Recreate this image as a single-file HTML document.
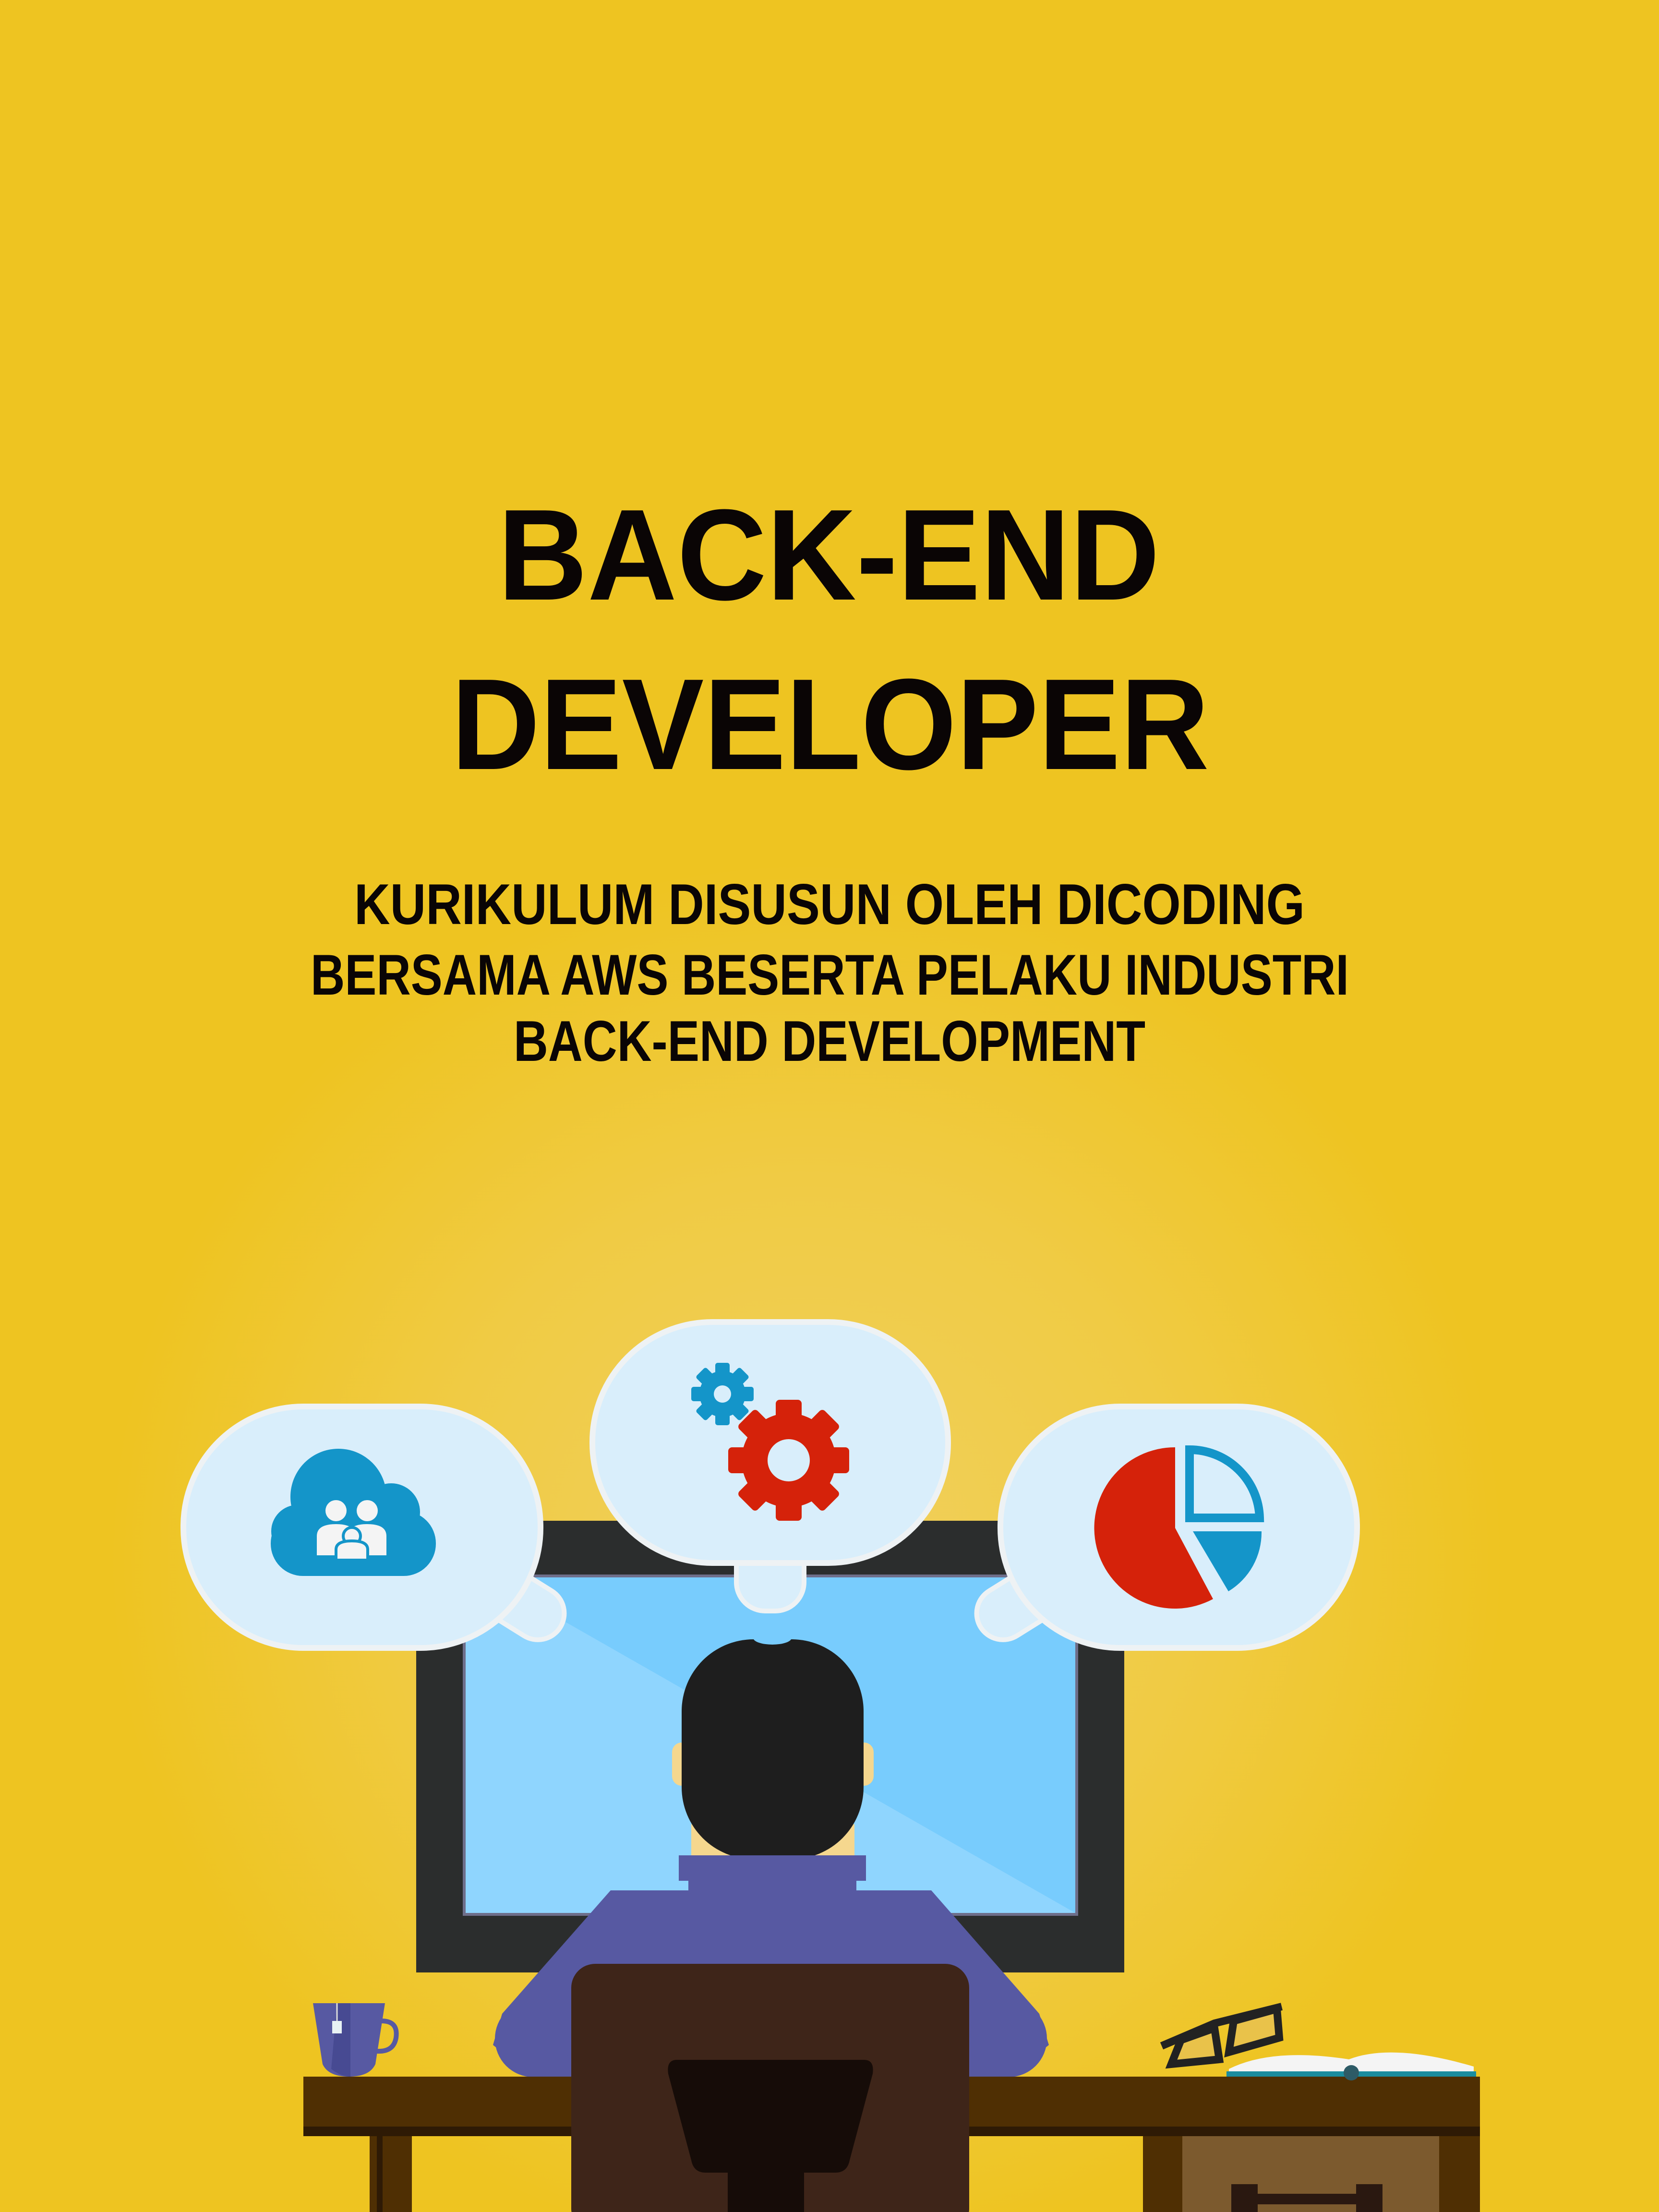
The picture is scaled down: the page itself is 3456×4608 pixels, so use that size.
<!DOCTYPE html>
<html><head><meta charset="utf-8"><style>
html,body{margin:0;padding:0;background:#EEC421;}
svg{display:block}
</style></head><body>
<svg width="3456" height="4608" viewBox="0 0 3456 4608" xmlns="http://www.w3.org/2000/svg">
<defs>
<radialGradient id="g" cx="1680" cy="3250" r="1450" gradientUnits="userSpaceOnUse">
<stop offset="0" stop-color="#F1D05E"/><stop offset="0.55" stop-color="#F0CB44"/><stop offset="1" stop-color="#EEC421"/>
</radialGradient>
</defs>
<rect width="3456" height="4608" fill="url(#g)"/>

<g font-family="'Liberation Sans',sans-serif" font-weight="700" fill="#0A0505" text-anchor="start">
<text x="1037" y="1249" font-size="270" textLength="1379" lengthAdjust="spacingAndGlyphs">BACK-END</text>
<text x="940" y="1602" font-size="270" textLength="1579" lengthAdjust="spacingAndGlyphs">DEVELOPER</text>
<text x="738" y="1925" font-size="120" textLength="1980" lengthAdjust="spacingAndGlyphs">KURIKULUM DISUSUN OLEH DICODING</text>
<text x="647" y="2072" font-size="120" textLength="2163" lengthAdjust="spacingAndGlyphs">BERSAMA AWS BESERTA PELAKU INDUSTRI</text>
<text x="1070" y="2210" font-size="120" textLength="1316" lengthAdjust="spacingAndGlyphs">BACK-END DEVELOPMENT</text>
</g>

<!-- monitor -->
<rect x="867" y="3168" width="1475" height="941" fill="#2B2D2D"/>
<rect x="964" y="3280" width="1282" height="711" fill="#6E6E8A"/>
<rect x="970" y="3286" width="1270" height="699" fill="#78CCFD"/>
<polygon points="970,3330 1180,3380 2240,3985 970,3985" fill="#8FD5FE"/>

<!-- bubble tails -->
<rect x="1534" y="3180" width="141" height="176" rx="60" fill="#D9EEFB" stroke="#EEF2F4" stroke-width="10"/>
<rect x="1010" y="3290" width="170" height="110" rx="55" transform="rotate(32 1095 3345)" fill="#D9EEFB" stroke="#EEF2F4" stroke-width="10"/>
<rect x="2030" y="3290" width="170" height="110" rx="55" transform="rotate(-32 2115 3345)" fill="#D9EEFB" stroke="#EEF2F4" stroke-width="10"/>
<!-- bubbles -->
<rect x="382" y="2930" width="744" height="503" rx="250" fill="#D9EEFB" stroke="#EEF2F4" stroke-width="12"/>
<rect x="1234" y="2754" width="741" height="502" rx="250" fill="#D9EEFB" stroke="#EEF2F4" stroke-width="12"/>
<rect x="2084" y="2930" width="743" height="503" rx="250" fill="#D9EEFB" stroke="#EEF2F4" stroke-width="12"/>

<!-- cloud icon -->
<g fill="#1495C9">
<rect x="564" y="3148" width="344" height="135" rx="67"/>
<circle cx="705" cy="3118" r="100"/>
<circle cx="815" cy="3150" r="60"/>
<circle cx="620" cy="3190" r="55"/>
</g>
<g fill="#F4F4F4">
<circle cx="700" cy="3147" r="22"/><circle cx="765" cy="3147" r="22"/>
<path d="M660,3240 v-40 q0,-25 40,-25 q40,0 40,25 v40 z"/>
<path d="M725,3240 v-40 q0,-25 40,-25 q40,0 40,25 v40 z"/>
<circle cx="733" cy="3200" r="18" stroke="#1495C9" stroke-width="6"/>
<path d="M700,3250 v-22 q0,-18 33,-18 q33,0 33,18 v22 z" stroke="#1495C9" stroke-width="6"/>
</g>

<!-- gears -->
<g fill="#1495C9" transform="translate(1505 2904)">
<circle r="48"/>
<g><rect x="-15" y="-65" width="30" height="130" rx="5"/><rect x="-15" y="-65" width="30" height="130" rx="5" transform="rotate(45)"/><rect x="-15" y="-65" width="30" height="130" rx="5" transform="rotate(90)"/><rect x="-15" y="-65" width="30" height="130" rx="5" transform="rotate(135)"/></g>
<circle r="18" fill="#D9EEFB"/>
</g>
<g fill="#D5220A" transform="translate(1643 3042)">
<circle r="98"/>
<g><rect x="-27" y="-126" width="54" height="252" rx="8"/><rect x="-27" y="-126" width="54" height="252" rx="8" transform="rotate(45)"/><rect x="-27" y="-126" width="54" height="252" rx="8" transform="rotate(90)"/><rect x="-27" y="-126" width="54" height="252" rx="8" transform="rotate(135)"/></g>
<circle r="44" fill="#D9EEFB"/>
</g>

<!-- pie -->
<path d="M2448,3183 L2527,3331 A168,168 0 1 1 2448,3015 Z" fill="#D5220A"/>
<path d="M2478,3162 L2478,3020 A146,146 0 0 1 2624,3162 Z" fill="#D9EEFB" stroke="#1495C9" stroke-width="18"/>
<path d="M2485,3190 L2628,3190 A143,143 0 0 1 2559,3315 Z" fill="#1495C9"/>

<!-- person -->
<rect x="1400" y="3630" width="420" height="90" rx="20" fill="#F5D78E"/>
<rect x="1440" y="3800" width="340" height="80" fill="#F5D78E"/>
<rect x="1420" y="3415" width="379" height="458" rx="150" fill="#1E1E1E"/>
<ellipse cx="1609" cy="3412" rx="40" ry="14" fill="#78CCFD"/>
<rect x="1414" y="3865" width="390" height="53" fill="#5759A2"/>
<rect x="1434" y="3915" width="350" height="30" fill="#5759A2"/>
<polygon points="1272,3938 1940,3938 2165,4195 2185,4260 2101,4327 1111,4327 1027,4260 1046,4195" fill="#5759A2"/>
<circle cx="1111" cy="4247" r="80" fill="#5759A2"/>
<circle cx="2101" cy="4247" r="80" fill="#5759A2"/>

<!-- desk -->
<rect x="632" y="4326" width="2451" height="118" fill="#4F2F03"/>
<rect x="632" y="4430" width="2451" height="20" fill="#2E1A05"/>
<rect x="770" y="4450" width="88" height="158" fill="#4F2F03"/>
<rect x="785" y="4450" width="12" height="158" fill="#2E1A05"/>
<rect x="2381" y="4450" width="82" height="158" fill="#4F2F03"/>
<rect x="2998" y="4450" width="85" height="158" fill="#4F2F03"/>
<rect x="2463" y="4450" width="535" height="158" fill="#7C5A2E"/>
<rect x="2565" y="4550" width="55" height="58" fill="#2A1810"/>
<rect x="2825" y="4550" width="55" height="58" fill="#2A1810"/>
<rect x="2565" y="4570" width="315" height="22" fill="#2A1810"/>

<!-- chair -->
<rect x="1190" y="4091" width="829" height="560" rx="50" fill="#3E2519"/>
<path d="M1410,4291 L1800,4291 Q1822,4291 1818,4320 L1770,4500 Q1765,4526 1740,4526 L1470,4526 Q1445,4526 1440,4500 L1392,4320 Q1388,4291 1410,4291 Z" fill="#160C08"/>
<rect x="1516" y="4520" width="159" height="88" fill="#160C08"/>

<!-- mug -->
<path d="M652,4173 L802,4173 L782,4300 Q770,4326 727,4326 Q684,4326 672,4300 Z" fill="#5759A2"/>
<path d="M702,4173 L730,4173 L730,4326 Q710,4326 690,4310 Z" fill="#474A92"/>
<path d="M795,4210 q35,0 30,35 q-5,30 -40,28" fill="none" stroke="#5759A2" stroke-width="10"/>
<line x1="702" y1="4173" x2="702" y2="4210" stroke="#ddd" stroke-width="3"/>
<rect x="692" y="4210" width="20" height="26" fill="#E8F2F4"/>

<!-- book -->
<path d="M2560,4310 Q2650,4265 2810,4290 Q2900,4255 3070,4305 L3070,4318 L2560,4318 Z" fill="#F4F4F4"/>
<rect x="2555" y="4315" width="520" height="11" fill="#1A8C9E"/>
<circle cx="2815" cy="4318" r="16" fill="#2D5B66"/>
<!-- glasses -->
<g fill="none" stroke="#222" stroke-width="16">
<path d="M2420,4262 L2530,4215 L2670,4180"/>
<path d="M2440,4300 L2460,4250 L2530,4225 L2540,4290 Z" fill="#E9C24A"/>
<path d="M2560,4275 L2570,4210 L2660,4185 L2665,4245 Z" fill="#E9C24A"/>
</g>
</svg>
</body></html>
